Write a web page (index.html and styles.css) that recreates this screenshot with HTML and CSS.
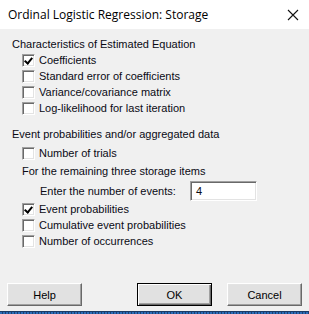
FILE: index.html
```html
<!DOCTYPE html>
<html lang="en">
<head>
    <meta charset="UTF-8">
    <title>Ordinal Logistic Regression: Storage</title>
    <link rel="stylesheet" href="styles.css">
</head>
<body>
    <div class="dialog">
        <div class="titlebar">
            <span class="title">Ordinal Logistic Regression: Storage</span>
            <svg class="close" width="12" height="12" viewBox="0 0 12 12">
                <path d="M1 1 L11 11 M11 1 L1 11" stroke="#111" stroke-width="1.1" fill="none"/>
            </svg>
        </div>

        <div class="content">
            <div class="heading">Characteristics of Estimated Equation</div>
            <label class="check-row"><span class="box checked"></span>Coefficients</label>
            <label class="check-row"><span class="box"></span>Standard error of coefficients</label>
            <label class="check-row"><span class="box"></span>Variance/covariance matrix</label>
            <label class="check-row"><span class="box"></span>Log-likelihood for last iteration</label>

            <div class="heading section">Event probabilities and/or aggregated data</div>
            <label class="check-row trials"><span class="box"></span>Number of trials</label>
            <div class="sub-heading">For the remaining three storage items</div>
            <div class="events-row">
                <span class="events-label">Enter the number of events:</span>
                <div class="events-input">4</div>
            </div>
            <label class="check-row"><span class="box checked"></span>Event probabilities</label>
            <label class="check-row"><span class="box"></span>Cumulative event probabilities</label>
            <label class="check-row"><span class="box"></span>Number of occurrences</label>

            <div class="buttons">
                <button class="btn">Help</button>
                <div class="right-buttons">
                    <button class="btn default">OK</button>
                    <button class="btn">Cancel</button>
                </div>
            </div>
        </div>
        <div class="taskbar"></div>
    </div>
</body>
</html>
```

FILE: styles.css
```css
html, body {
    margin: 0;
    padding: 0;
}
body {
    width: 309px;
    height: 314px;
    overflow: hidden;
    font-family: "Liberation Sans", Arial, sans-serif;
    font-size: 11px;
    color: #0a0a14;
}
.dialog {
    display: flex;
    flex-direction: column;
    height: 314px;
}
.titlebar {
    height: 29px;
    background: #fff;
    display: flex;
    align-items: center;
    justify-content: space-between;
    padding: 0 10px 0 8px;
}
.title {
    font-family: "Open Sans", "Noto Sans", sans-serif;
    font-size: 12px;
    color: #000;
}
.content {
    flex: 1;
    background: #f0f0f0;
    display: flex;
    flex-direction: column;
    padding: 7px 7px 5px 0;
}
.heading {
    height: 16px;
    line-height: 16px;
    padding-left: 12px;
}
.heading.section {
    margin-top: 10px;
}
.check-row {
    height: 16px;
    line-height: 16px;
    padding-left: 22px;
    display: flex;
    align-items: center;
}
.check-row.trials {
    margin-top: 3px;
}
.box {
    width: 13px;
    height: 13px;
    box-sizing: border-box;
    margin-right: 4px;
    background: #fff;
    border-top: 1px solid #a0a0a0;
    border-left: 1px solid #a0a0a0;
    border-right: 1px solid #fff;
    border-bottom: 1px solid #fff;
    box-shadow: inset 1px 1px 0 #696969, inset -1px -1px 0 #e3e3e3;
    position: relative;
}
.box.checked::after {
    content: "";
    position: absolute;
    left: 3px;
    top: 1px;
    width: 3px;
    height: 6px;
    border-right: 2px solid #000;
    border-bottom: 2px solid #000;
    transform: rotate(40deg);
}
.sub-heading {
    height: 16px;
    line-height: 16px;
    padding-left: 22px;
    margin-top: 2px;
}
.events-row {
    height: 20px;
    margin-top: 2px;
    display: flex;
    align-items: center;
}
.events-label {
    padding-left: 40px;
    width: 150px;
}
.events-input {
    width: 67px;
    height: 20px;
    box-sizing: border-box;
    background: #fff;
    border-top: 1px solid #a0a0a0;
    border-left: 1px solid #a0a0a0;
    border-right: 1px solid #fff;
    border-bottom: 1px solid #fff;
    box-shadow: inset 1px 1px 0 #696969, inset -1px -1px 0 #e3e3e3;
    padding-left: 5px;
    line-height: 18px;
}
.buttons {
    margin-top: auto;
    display: flex;
    justify-content: space-between;
    padding-left: 7px;
}
.right-buttons {
    display: flex;
    gap: 15px;
}
.btn {
    width: 75px;
    height: 23px;
    box-sizing: border-box;
    background: #e1e1e1;
    font-family: "Liberation Sans", Arial, sans-serif;
    font-size: 11px;
    color: #000;
    padding: 0;
    border-top: 1px solid #fff;
    border-left: 1px solid #fff;
    border-right: 1px solid #696969;
    border-bottom: 1px solid #696969;
    box-shadow: inset -1px -1px 0 #a0a0a0, inset 1px 1px 0 #e3e3e3;
}
.btn.default {
    border: 1px solid #000;
    box-shadow: inset 1px 1px 0 #fff, inset -1px -1px 0 #696969, inset -2px -2px 0 #a0a0a0;
}
.taskbar {
    height: 3px;
    background: repeating-linear-gradient(90deg, #2b6cb8 0, #2b6cb8 2px, #1c3f70 2px, #1c3f70 3px);
    border-top: 1px solid #1a3a66;
    box-sizing: border-box;
}
```
